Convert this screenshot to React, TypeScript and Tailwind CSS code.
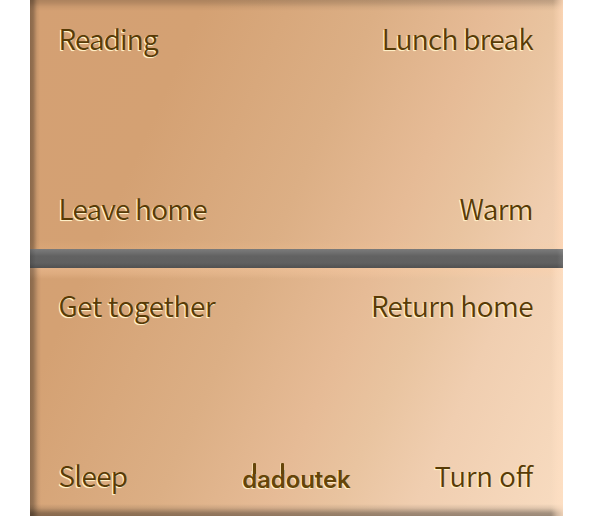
type LabelProps = { text: string; className?: string };

function SceneLabel({ text, className = "text-[28px]" }: LabelProps) {
  return (
    <button
      className={`block h-10 whitespace-nowrap leading-10 font-[350] text-[#583b06] [text-shadow:-1px_1px_1px_#fff0c8,-1px_1px_0_#ffebc0] ${className}`}
    >
      {text}
    </button>
  );
}

function TallD() {
  return (
    <span className="relative inline-block">
      d
      <span className="absolute top-[-3px] right-[1.5px] h-[11px] w-[3px] rounded-t-[1px] bg-[#654509] shadow-[-1px_0_0_#f3d9ab]" />
    </span>
  );
}

function Logo() {
  return (
    <div className="mb-[22px] ml-[31px] flex h-7 items-end whitespace-nowrap font-['Inter',sans-serif] text-[24px] leading-7 font-semibold tracking-[-0.1px] text-[#654509] [text-shadow:-1px_1px_0_#fff0c8]">
      <TallD />a<TallD />outek
    </div>
  );
}

export default function App() {
  return (
    <main className="h-[516px] w-[592px] overflow-hidden bg-white pl-[30px] font-['Noto_Sans_CJK_SC',sans-serif]">
      <div className="flex h-[516px] w-[533px] flex-col bg-[linear-gradient(114deg,#d4a073_0%,#d4a173_23%,#dcaf85_46%,#e6bb96_61%,#e9c4a0_70%,#f0ceb0_80%,#f8dcc1_100%)]">
        <section className="flex h-[249px] flex-col justify-between bg-[linear-gradient(90deg,#00000058_0px,#0000004d_3px,#00000010_7px,transparent_10px,transparent_523px,#ffd8b880_529px,#ffd8b8cc_533px),linear-gradient(180deg,#00000030_0px,#00000024_3px,#0000000c_7px,transparent_11px,transparent_240px,#ffc99120_249px)] pt-[18px] pr-[30px] pb-[21px] pl-[28.5px]">
          <div className="flex justify-between">
            <SceneLabel text="Reading" className="text-[28px] tracking-[-0.85px]" />
            <SceneLabel text="Lunch break" className="text-[28px] tracking-[-0.7px]" />
          </div>
          <div className="flex justify-between">
            <SceneLabel text="Leave home" className="text-[28px] tracking-[-0.75px]" />
            <SceneLabel text="Warm" className="text-[28px] tracking-[-0.6px]" />
          </div>
        </section>
        <div className="h-[19px] shrink-0 bg-[linear-gradient(90deg,#00000028_0px,transparent_6px,transparent_527px,#ffffff18_533px),linear-gradient(180deg,#7b7b7b_0px,#6e6e6e_4px,#626262_7px,#606060_14px,#505050_19px)]" />
        <section className="flex h-[248px] flex-col justify-between bg-[linear-gradient(90deg,#00000058_0px,#0000004d_3px,#00000010_8px,transparent_11px,transparent_521px,#ffe0c480_527px,#ffe0c4cc_533px),linear-gradient(180deg,#ffd0a860_0px,#ffd0a838_6px,transparent_11px,transparent_236px,#00000018_240px,#00000055_245px,#00000060_248px)] pt-[17px] pr-[30px] pl-[28.5px]">
          <div className="flex justify-between">
            <SceneLabel text="Get together" className="text-[28px] tracking-[-0.35px]" />
            <SceneLabel text="Return home" className="text-[28px] tracking-[-0.55px]" />
          </div>
          <div className="flex items-end justify-between">
            <SceneLabel text="Sleep" className="mb-[21px] text-[28px] tracking-[-0.7px]" />
            <Logo />
            <SceneLabel text="Turn off" className="mb-[21px] text-[27.5px]" />
          </div>
        </section>
      </div>
    </main>
  );
}
